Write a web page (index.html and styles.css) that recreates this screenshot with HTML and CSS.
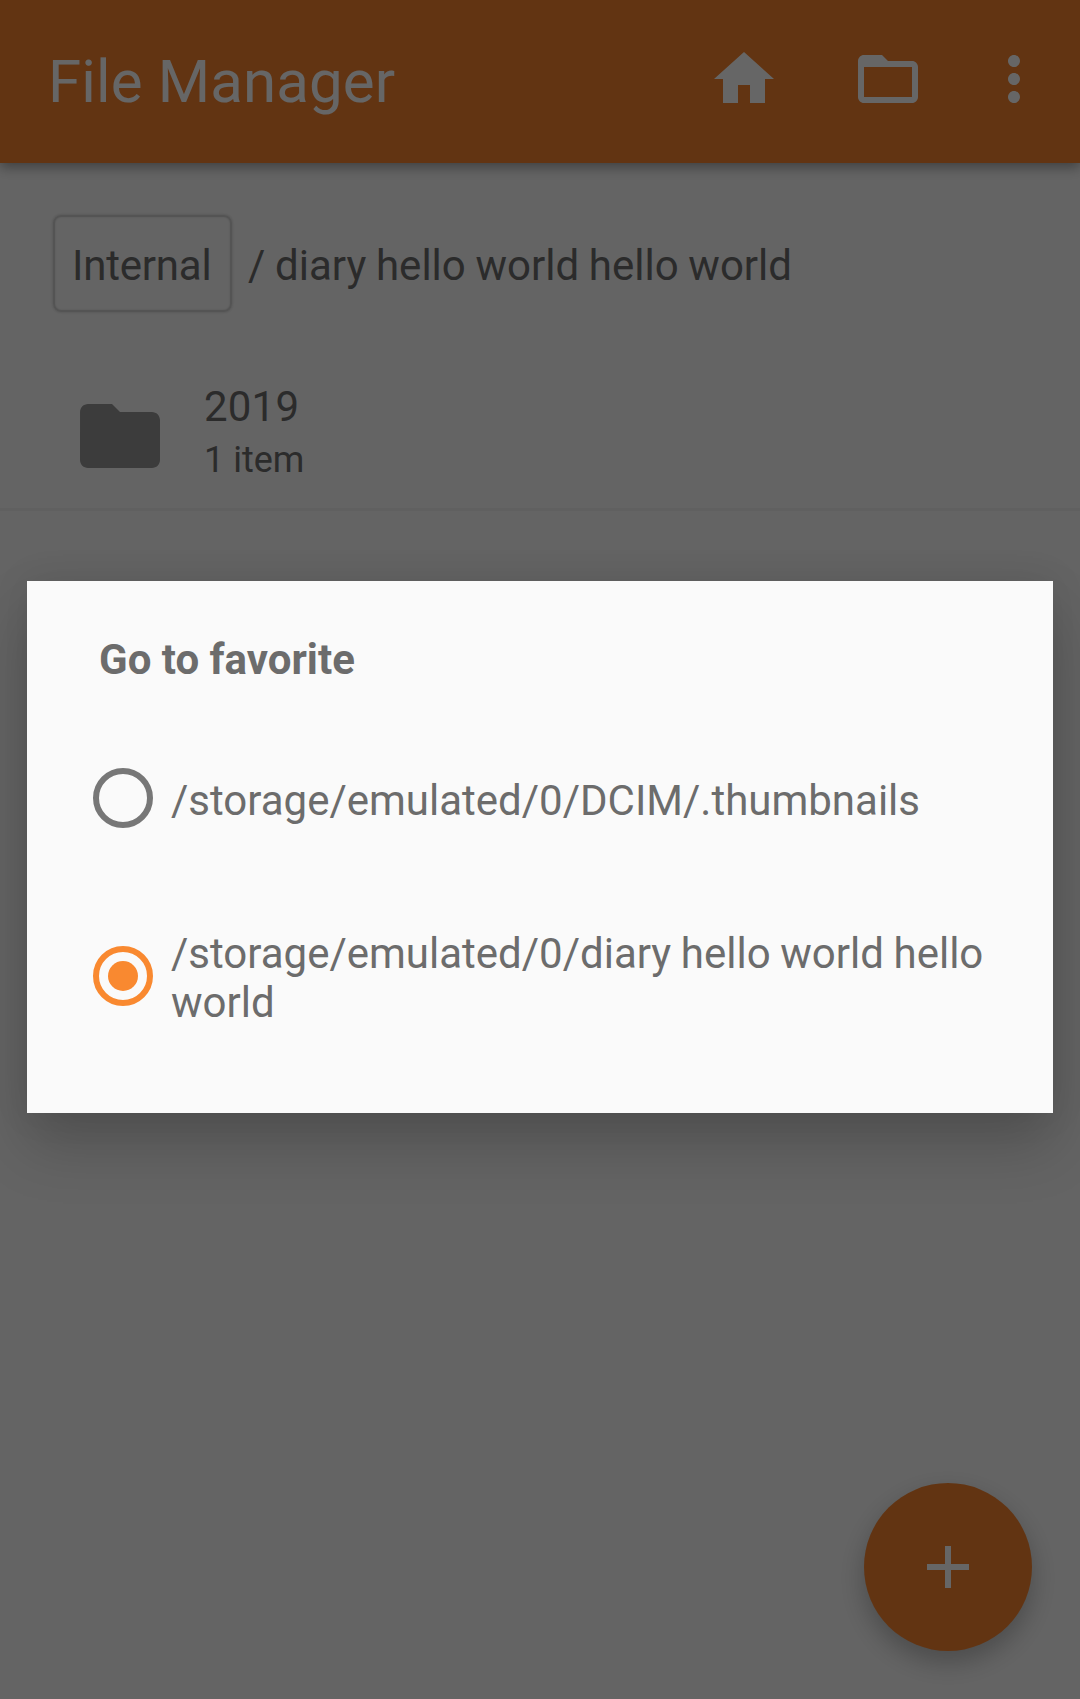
FILE: index.html
```html
<!DOCTYPE html>
<html lang="en">
<head>
<meta charset="utf-8">
<title>File Manager</title>
<link rel="stylesheet" href="styles.css">
</head>
<body>
<div class="screen">
  <header class="app-bar">
    <h1 class="app-title">File Manager</h1>
    <svg class="icon icon-home" viewBox="0 0 24 24"><path d="M10 20v-6h4v6h5v-8h3L12 3 2 12h3v8z"/></svg>
    <svg class="icon icon-folder" viewBox="0 0 24 24"><path d="M20 6h-8l-2-2H4c-1.100 0-1.990.9-1.990 2L2 18c0 1.100.9 2 2 2h16c1.100 0 2-.9 2-2V8c0-1.100-.9-2-2-2zm0 12H4V8h16v10z"/></svg>
    <svg class="icon" viewBox="0 0 24 24"><path d="M12 8c1.100 0 2-.9 2-2s-.9-2-2-2-2 .9-2 2 .9 2 2 2zm0 2c-1.100 0-2 .9-2 2s.9 2 2 2 2-.9 2-2-.9-2-2-2zm0 6c-1.100 0-2 .9-2 2s.9 2 2 2 2-.9 2-2-.9-2-2-2z"/></svg>
  </header>
  <nav class="breadcrumb">
    <span class="crumb-root">Internal</span>
    <span class="crumb-path">/ diary hello world hello world</span>
  </nav>
  <div class="file-row">
    <svg class="file-icon" viewBox="0 0 24 24"><path d="M10 4H4c-1.100 0-1.990.9-1.990 2L2 18c0 1.100.9 2 2 2h16c1.100 0 2-.9 2-2V8c0-1.100-.9-2-2-2h-8l-2-2z"/></svg>
    <div class="file-info">
      <span class="file-name">2019</span>
      <span class="file-meta">1 item</span>
    </div>
  </div>
  <div class="fab"><svg class="icon" viewBox="0 0 24 24"><path d="M19 13h-6v6h-2v-6H5v-2h6V5h2v6h6v2z"/></svg></div>
</div>
<div class="scrim">
  <section class="dialog">
    <h2 class="dialog-title">Go to favorite</h2>
    <div class="option option-first">
      <span class="radio"></span>
      <span class="option-label">/storage/emulated/0/DCIM/.thumbnails</span>
    </div>
    <div class="option">
      <span class="radio radio-on"></span>
      <span class="option-label">/storage/emulated/0/diary hello world hello world</span>
    </div>
  </section>
</div>
</body>
</html>
```
FILE: styles.css
```css
* { box-sizing: border-box; }
body {
  margin: 0;
  font-family: Roboto, "Liberation Sans", sans-serif;
  font-size: 42px;
  line-height: 49px;
  color: #6c6c6c;
}
.screen {
  position: relative;
  width: 1080px;
  height: 1699px;
  background: #fafafa;
  overflow: hidden;
}
.app-bar {
  display: flex;
  align-items: center;
  height: 163px;
  padding: 0 30px 5px 48px;
  background: #f5832f;
  box-shadow: 0 4px 12px rgba(0, 0, 0, .38);
}
.app-title {
  flex: 1;
  margin: 6px 0 0;
  font-size: 60px;
  line-height: 70px;
  font-weight: 400;
  letter-spacing: .12px;
  color: #fff;
}
.icon { display: block; width: 72px; height: 72px; fill: #fff; }
.icon-home { margin-right: 72px; }
.icon-folder { margin-right: 54px; }
.breadcrumb {
  display: flex;
  align-items: center;
  gap: 16px;
  padding: 52px 53px 0;
}
.crumb-root {
  width: 179px;
  height: 97px;
  padding: 24px 0 0 17px;
  border: 2px solid #d2d2d2;
  border-radius: 8px;
  box-shadow: 0 0 3px #c8c8c8, inset 0 0 2px #d2d2d2;
  letter-spacing: -.2px;
}
.crumb-path { margin-top: 4px; word-spacing: -.7px; }
.file-row {
  display: flex;
  height: 199px;
  padding: 76px 72px 0;
  border-bottom: 3px solid #efefef;
}
.file-icon { width: 96px; height: 96px; fill: #969696; }
.file-info { display: flex; flex-direction: column; padding-left: 36px; margin-top: -6px; }
.file-name { line-height: 49px; letter-spacing: .2px; }
.file-meta { font-size: 36px; line-height: 59px; }
.fab {
  position: absolute;
  right: 48px;
  bottom: 48px;
  display: flex;
  align-items: center;
  justify-content: center;
  width: 168px;
  height: 168px;
  border-radius: 50%;
  background: #f5832f;
  box-shadow: 0 11px 26px rgba(0, 0, 0, .25);
}
.scrim {
  position: absolute;
  inset: 0;
  height: 1699px;
  padding: 581px 27px 0;
  background: rgba(0, 0, 0, .6);
  overflow: hidden;
}
.dialog {
  height: 532px;
  padding: 54px 66px 0;
  background: #fafafa;
  box-shadow: 0 32px 56px rgba(0, 0, 0, .19), 0 0 36px rgba(0, 0, 0, .08);
}
.dialog-title {
  margin: 0 0 0 6px;
  font-size: 42px;
  line-height: 49px;
  font-weight: 700;
}
.option { display: flex; align-items: flex-start; gap: 18px; }
.option-first { margin: 84px 0 103px; height: 60px; }
.option-label { margin-top: -2px; word-spacing: -.8px; }
.option-first .option-label { margin-top: 8px; }
.radio {
  display: flex;
  align-items: center;
  justify-content: center;
  flex: none;
  width: 60px;
  height: 60px;
  border: 6px solid #777;
  border-radius: 50%;
}
.radio-on { margin-top: 15px; border-color: #f98930; }
.radio-on::after {
  content: "";
  width: 30px;
  height: 30px;
  border-radius: 50%;
  background: #f98930;
}
```
